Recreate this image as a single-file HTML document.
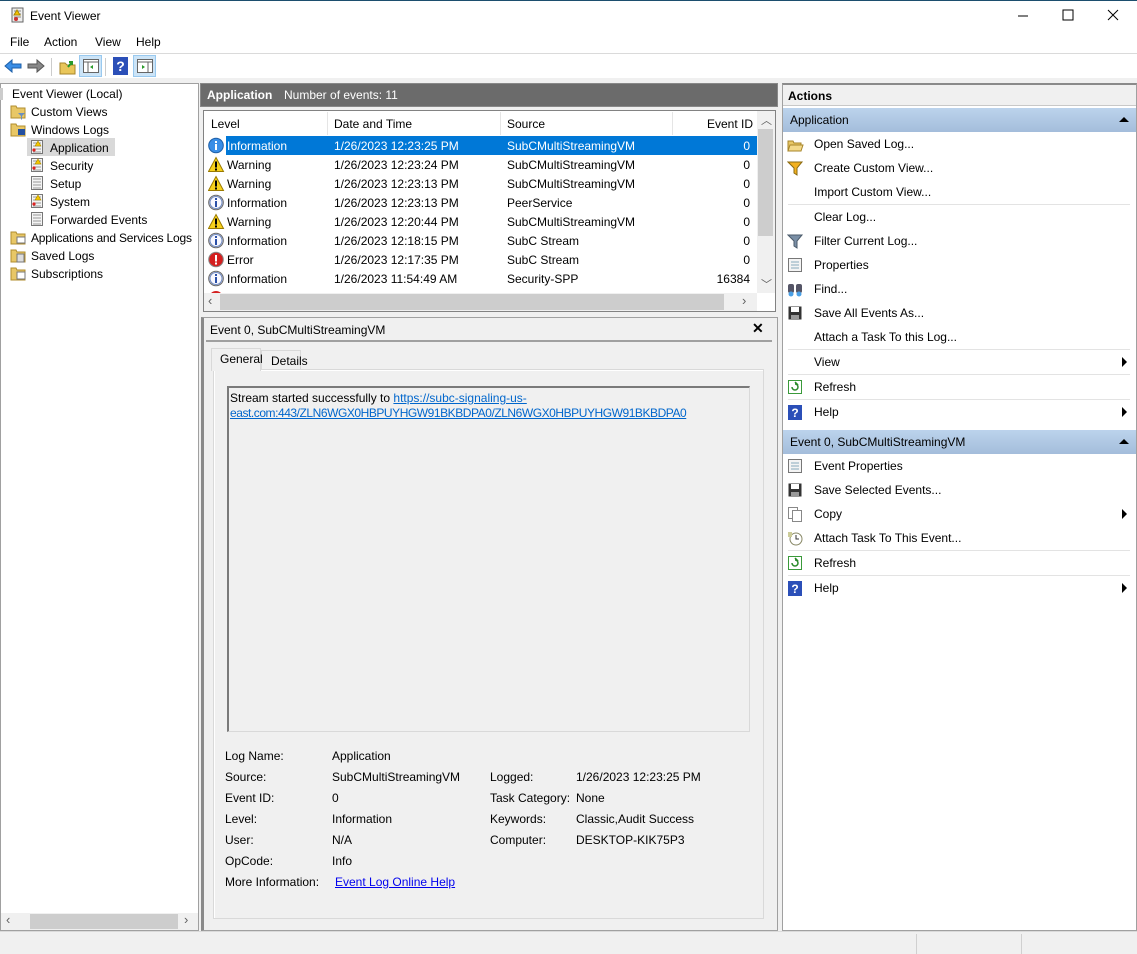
<!DOCTYPE html>
<html><head><meta charset="utf-8"><style>
*{margin:0;padding:0;box-sizing:border-box}
body{width:1137px;height:954px;overflow:hidden;background:#f0f0f0;font-family:"Liberation Sans",sans-serif;font-size:12px;color:#000;position:relative}
.a{position:absolute;white-space:nowrap}
.ico{position:absolute;width:16px;height:16px}
.row{position:absolute;left:206px;width:551px;height:19px}
.row span{position:absolute;top:3px}
.act{position:absolute;left:814px}
.sep{position:absolute;left:788px;width:342px;height:1px;background:#e3e3e3}
.tri{position:absolute;width:0;height:0;border-top:5px solid transparent;border-bottom:5px solid transparent;border-left:5px solid #000}
a{color:#0066cc}
</style></head><body>
<div class="a" style="left:0;top:0;width:1137px;height:53px;background:#fff"></div>
<div class="a" style="left:0;top:0;width:1137px;height:1px;background:#1c4e6e"></div>
<svg class="ico" style="left:9px;top:7px" viewBox="0 0 16 16"><rect x="3" y="1" width="11" height="14" fill="#eee" stroke="#666"/><path d="M5 4h7M5 7h7M5 10h7" stroke="#888"/><path d="M8 3l3 5H5z" fill="#f5c400" stroke="#a80"/><circle cx="7" cy="12" r="2" fill="#c33"/></svg>
<div class="a" style="left:30px;top:9px">Event Viewer</div>
<svg class="a" style="left:1017px;top:10px" width="12" height="12"><path d="M1 6h10" stroke="#000"/></svg>
<svg class="a" style="left:1062px;top:9px" width="12" height="12"><rect x="1" y="1" width="10" height="10" fill="none" stroke="#000"/></svg>
<svg class="a" style="left:1107px;top:9px" width="12" height="12"><path d="M1 1l10 10M11 1L1 11" stroke="#000"/></svg>
<div class="a" style="left:10px;top:35px">File</div>
<div class="a" style="left:44px;top:35px">Action</div>
<div class="a" style="left:95px;top:35px">View</div>
<div class="a" style="left:136px;top:35px">Help</div>
<div class="a" style="left:0;top:53px;width:1137px;height:1px;background:#dadada"></div>
<div class="a" style="left:0;top:54px;width:1137px;height:24px;background:#fff"></div>
<svg class="a" style="left:4px;top:58px" width="18" height="16"><path d="M1 8l7-6v4h9v4H8v4z" fill="#3a8ee6" stroke="#1d5fa8"/></svg>
<svg class="a" style="left:27px;top:58px" width="18" height="16"><path d="M17 8l-7-6v4H1v4h9v4z" fill="#888" stroke="#555"/></svg>
<div class="a" style="left:51px;top:58px;width:1px;height:18px;background:#ccc"></div>
<svg class="a" style="left:59px;top:58px" width="17" height="17"><path d="M1 5h5l2 2h8v9H1z" fill="#e9c65a" stroke="#a7852a"/><path d="M9 9l4-5M10 4h3v3" stroke="#2a9a2a" stroke-width="2" fill="none"/></svg>
<div class="a" style="left:79px;top:55px;width:23px;height:22px;background:#cce4f7;border:1px solid #99c9ef"></div>
<svg class="a" style="left:83px;top:59px" width="16" height="14"><rect x="0.5" y="0.5" width="15" height="13" fill="#fff" stroke="#666"/><path d="M0 3h16M5 3v11" stroke="#666"/><path d="M10 6l-3 2 3 2z" fill="#2a9a2a"/></svg>
<div class="a" style="left:105px;top:58px;width:1px;height:18px;background:#ccc"></div>
<div class="a" style="left:113px;top:57px;width:15px;height:18px;background:#2b4fb8;color:#fff;font-weight:bold;text-align:center;line-height:18px;font-size:14px">?</div>
<div class="a" style="left:133px;top:55px;width:23px;height:22px;background:#cce4f7;border:1px solid #99c9ef"></div>
<svg class="a" style="left:137px;top:59px" width="16" height="14"><rect x="0.5" y="0.5" width="15" height="13" fill="#fff" stroke="#666"/><path d="M0 3h16M11 3v11" stroke="#666"/><path d="M5 6l3 2-3 2z" fill="#2a9a2a"/></svg>
<div class="a" style="left:0;top:83px;width:199px;height:848px;background:#fff;border:1px solid #a0a0a0"></div>
<div class="a" style="left:27px;top:138px;width:88px;height:18px;background:#d9d9d9"></div>
<div class="a" style="left:12px;top:87px">Event Viewer (Local)</div>
<div class="a" style="left:31px;top:105px">Custom Views</div>
<div class="a" style="left:31px;top:123px">Windows Logs</div>
<div class="a" style="left:50px;top:141px">Application</div>
<div class="a" style="left:50px;top:159px">Security</div>
<div class="a" style="left:50px;top:177px">Setup</div>
<div class="a" style="left:50px;top:195px">System</div>
<div class="a" style="left:50px;top:213px">Forwarded Events</div>
<div class="a" style="left:31px;top:231px;letter-spacing:-0.2px">Applications and Services Logs</div>
<div class="a" style="left:31px;top:249px">Saved Logs</div>
<div class="a" style="left:31px;top:267px">Subscriptions</div>
<svg class="a" style="left:0;top:86px" width="200" height="200">
<defs><g id="fd"><path d="M1 3h5l1 2h8v10H1z" fill="#e8c766" stroke="#b08d2e"/></g>
<g id="lg"><rect x="2.5" y="1.5" width="11" height="13" fill="#f4f4f4" stroke="#777"/><path d="M4 4h8M4 7h8M4 10h8M4 13h8" stroke="#999"/></g>
<g id="lw"><use href="#lg"/><path d="M9 2l3 5H6z" fill="#f3c600" stroke="#a80" stroke-width=".6"/><circle cx="5" cy="11" r="1.6" fill="#d22"/></g></defs>
<rect x="0" y="2" width="3" height="12" fill="#ccc"/>
<use href="#fd" x="10" y="17"/><path d="M18 27h7l-3 3v3l-1 1v-4z" fill="#6a8fbf"/>
<use href="#fd" x="10" y="35"/><rect x="18" y="43" width="7" height="6" fill="#2450a0"/>
<use href="#lw" x="29" y="53"/><use href="#lw" x="29" y="71"/><use href="#lg" x="29" y="89"/><use href="#lw" x="29" y="107"/><use href="#lg" x="29" y="125"/>
<use href="#fd" x="10" y="143"/><rect x="17" y="151" width="8" height="6" fill="#fff" stroke="#777"/>
<use href="#fd" x="10" y="161"/><rect x="17" y="168" width="7" height="8" fill="#ddd" stroke="#777"/>
<use href="#fd" x="10" y="179"/><rect x="17" y="186" width="8" height="7" fill="#fff" stroke="#777"/>
</svg>
<div class="a" style="left:1px;top:913px;width:197px;height:17px;background:#f0f0f0"></div>
<div class="a" style="left:30px;top:914px;width:148px;height:15px;background:#cdcdcd"></div>
<div class="a" style="left:6px;top:912px;color:#606060;font-size:13px">‹</div>
<div class="a" style="left:184px;top:912px;color:#606060;font-size:13px">›</div>
<div class="a" style="left:200px;top:83px;width:578px;height:24px;background:#6b6b6b;border:1px solid #888"></div>
<div class="a" style="left:207px;top:88px;color:#fff;font-weight:bold">Application</div>
<div class="a" style="left:284px;top:88px;color:#fff">Number of events: 11</div>
<div class="a" style="left:203px;top:110px;width:573px;height:202px;background:#fff;border:1px solid #828282"></div>
<div class="a" style="left:327px;top:112px;width:1px;height:23px;background:#e5e5e5"></div>
<div class="a" style="left:500px;top:112px;width:1px;height:23px;background:#e5e5e5"></div>
<div class="a" style="left:672px;top:112px;width:1px;height:23px;background:#e5e5e5"></div>
<div class="a" style="left:211px;top:117px">Level</div>
<div class="a" style="left:334px;top:117px">Date and Time</div>
<div class="a" style="left:507px;top:117px">Source</div>
<div class="a" style="left:707px;top:117px">Event ID</div>
<div class="a" style="left:226px;top:136px;width:531px;height:19px;background:#0078d7"></div>
<div class="a" style="left:757px;top:111px;width:18px;height:182px;background:#f0f0f0"></div>
<div class="a" style="left:758px;top:129px;width:15px;height:107px;background:#cdcdcd"></div>
<div class="a" style="left:761px;top:112px;color:#606060;font-size:11px">︿</div>
<div class="a" style="left:761px;top:276px;color:#606060;font-size:11px">﹀</div>
<div class="a" style="left:204px;top:293px;width:553px;height:18px;background:#f0f0f0"></div>
<div class="a" style="left:220px;top:294px;width:504px;height:16px;background:#cdcdcd"></div>
<div class="a" style="left:208px;top:293px;color:#606060;font-size:13px">‹</div>
<div class="a" style="left:742px;top:293px;color:#606060;font-size:13px">›</div>
<svg class="a" style="left:0;top:0" width="0" height="0"><defs>
<g id="inf"><circle cx="8" cy="8" r="7.3" fill="#eef" stroke="#666"/><circle cx="8" cy="8" r="6" fill="#f8f8ff" stroke="#6c88c0"/><rect x="7" y="6.5" width="2" height="6" fill="#2a4fa8"/><rect x="7" y="3.5" width="2" height="2" fill="#2a4fa8"/></g>
<g id="infs"><circle cx="8" cy="8" r="7.3" fill="#3a8ee6" stroke="#1d5fa8"/><rect x="7" y="6.5" width="2" height="6" fill="#fff"/><rect x="7" y="3.5" width="2" height="2" fill="#fff"/></g>
<g id="wrn"><path d="M8 1l7.5 14H0.5z" fill="#f8d21c" stroke="#9a7a00"/><rect x="7" y="5" width="2" height="6" fill="#000"/><rect x="7" y="12" width="2" height="2" fill="#000"/></g>
<g id="err"><circle cx="8" cy="8" r="7.3" fill="#d42020" stroke="#888"/><rect x="7" y="3.5" width="2" height="6.5" fill="#fff"/><rect x="7" y="11" width="2" height="2" fill="#fff"/></g>
</defs></svg>
<svg class="a" style="left:208px;top:136px" width="18" height="157">
<use href="#infs" y="1.5"/><use href="#wrn" y="20.5"/><use href="#wrn" y="39.5"/><use href="#inf" y="58.5"/><use href="#wrn" y="77.5"/><use href="#inf" y="96.5"/><use href="#err" y="115.5"/><use href="#inf" y="134.5"/><circle cx="8" cy="162" r="7" fill="#d42020"/></svg>
<div class="row" style="top:136px;color:#fff"><span style="left:21px">Information</span><span style="left:128px">1/26/2023 12:23:25 PM</span><span style="left:301px">SubCMultiStreamingVM</span><span style="right:7px">0</span></div>
<div class="row" style="top:155px"><span style="left:21px">Warning</span><span style="left:128px">1/26/2023 12:23:24 PM</span><span style="left:301px">SubCMultiStreamingVM</span><span style="right:7px">0</span></div>
<div class="row" style="top:174px"><span style="left:21px">Warning</span><span style="left:128px">1/26/2023 12:23:13 PM</span><span style="left:301px">SubCMultiStreamingVM</span><span style="right:7px">0</span></div>
<div class="row" style="top:193px"><span style="left:21px">Information</span><span style="left:128px">1/26/2023 12:23:13 PM</span><span style="left:301px">PeerService</span><span style="right:7px">0</span></div>
<div class="row" style="top:212px"><span style="left:21px">Warning</span><span style="left:128px">1/26/2023 12:20:44 PM</span><span style="left:301px">SubCMultiStreamingVM</span><span style="right:7px">0</span></div>
<div class="row" style="top:231px"><span style="left:21px">Information</span><span style="left:128px">1/26/2023 12:18:15 PM</span><span style="left:301px">SubC Stream</span><span style="right:7px">0</span></div>
<div class="row" style="top:250px"><span style="left:21px">Error</span><span style="left:128px">1/26/2023 12:17:35 PM</span><span style="left:301px">SubC Stream</span><span style="right:7px">0</span></div>
<div class="row" style="top:269px"><span style="left:21px">Information</span><span style="left:128px">1/26/2023 11:54:49 AM</span><span style="left:301px">Security-SPP</span><span style="right:7px">16384</span></div>
<div class="a" style="left:201px;top:317px;width:577px;height:614px;border:1px solid #a0a0a0;border-left:3px solid #8a8a8a"></div>
<div class="a" style="left:210px;top:323px">Event 0, SubCMultiStreamingVM</div>
<div class="a" style="left:752px;top:320px;font-weight:bold;font-size:14px">✕</div>
<div class="a" style="left:206px;top:340px;width:566px;height:2px;background:#a0a0a0"></div>
<div class="a" style="left:213px;top:369px;width:551px;height:550px;background:#f0f0f0;border:1px solid #d9d9d9;box-shadow:inset 1px 1px 0 #fff"></div>
<div class="a" style="left:211px;top:348px;width:50px;height:23px;background:#f0f0f0;border:1px solid #d9d9d9;border-bottom:none"></div>
<div class="a" style="left:261px;top:350px;width:40px;height:20px;background:#f0f0f0;border:1px solid #d9d9d9"></div>
<div class="a" style="left:220px;top:352px">General</div>
<div class="a" style="left:271px;top:354px">Details</div>
<div class="a" style="left:227px;top:386px;width:523px;height:346px;border:1px solid #d9d9d9;border-top:2px solid #7a7a7a;border-left:2px solid #7a7a7a"></div>
<div class="a" style="left:230px;top:391px;line-height:15px">Stream started successfully to <a href="#">https://subc-signaling-us-</a><br><a href="#" style="letter-spacing:-0.45px">east.com:443/ZLN6WGX0HBPUYHGW91BKBDPA0/ZLN6WGX0HBPUYHGW91BKBDPA0</a></div>
<div class="a" style="left:225px;top:746px;line-height:21px">Log Name:<br>Source:<br>Event ID:<br>Level:<br>User:<br>OpCode:<br>More Information:</div>
<div class="a" style="left:332px;top:746px;line-height:21px">Application<br>SubCMultiStreamingVM<br>0<br>Information<br>N/A<br>Info</div>
<div class="a" style="left:335px;top:875px"><a href="#" style="color:#0000ee">Event Log Online Help</a></div>
<div class="a" style="left:490px;top:767px;line-height:21px">Logged:<br>Task Category:<br>Keywords:<br>Computer:</div>
<div class="a" style="left:576px;top:767px;line-height:21px">1/26/2023 12:23:25 PM<br>None<br>Classic,Audit Success<br>DESKTOP-KIK75P3</div>
<div class="a" style="left:782px;top:83px;width:355px;height:848px;background:#fff;border:1px solid #a0a0a0;border-top:2px solid #8a8a8a"></div>
<div class="a" style="left:783px;top:85px;width:353px;height:21px;background:#f0f0f0;border-bottom:1px solid #c8c8c8"></div>
<div class="a" style="left:788px;top:89px;font-weight:bold">Actions</div>
<div class="a" style="left:783px;top:108px;width:353px;height:24px;background:linear-gradient(#bcd3ec,#a4bddb)"></div>
<div class="a" style="left:790px;top:113px">Application</div>
<div class="a" style="left:1119px;top:117px;border-left:5px solid transparent;border-right:5px solid transparent;border-bottom:5px solid #000"></div>
<div class="a" style="left:783px;top:430px;width:353px;height:24px;background:linear-gradient(#bcd3ec,#a4bddb)"></div>
<div class="a" style="left:790px;top:435px">Event 0, SubCMultiStreamingVM</div>
<div class="a" style="left:1119px;top:439px;border-left:5px solid transparent;border-right:5px solid transparent;border-bottom:5px solid #000"></div>
<div class="act" style="top:137px">Open Saved Log...</div>
<div class="act" style="top:161px">Create Custom View...</div>
<div class="act" style="top:185px">Import Custom View...</div>
<div class="sep" style="top:204px"></div>
<div class="act" style="top:210px">Clear Log...</div>
<div class="act" style="top:234px">Filter Current Log...</div>
<div class="act" style="top:258px">Properties</div>
<div class="act" style="top:282px">Find...</div>
<div class="act" style="top:306px">Save All Events As...</div>
<div class="act" style="top:330px">Attach a Task To this Log...</div>
<div class="sep" style="top:349px"></div>
<div class="act" style="top:355px">View</div>
<div class="tri" style="left:1122px;top:357px"></div>
<div class="sep" style="top:374px"></div>
<div class="act" style="top:380px">Refresh</div>
<div class="sep" style="top:399px"></div>
<div class="act" style="top:405px">Help</div>
<div class="tri" style="left:1122px;top:407px"></div>
<div class="act" style="top:459px">Event Properties</div>
<div class="act" style="top:483px">Save Selected Events...</div>
<div class="act" style="top:507px">Copy</div>
<div class="tri" style="left:1122px;top:509px"></div>
<div class="act" style="top:531px">Attach Task To This Event...</div>
<div class="sep" style="top:550px"></div>
<div class="act" style="top:556px">Refresh</div>
<div class="sep" style="top:575px"></div>
<div class="act" style="top:581px">Help</div>
<div class="tri" style="left:1122px;top:583px"></div>
<svg class="a" style="left:787px;top:135px" width="20" height="470">
<g transform="translate(0,1)"><path d="M1 5h5l1 2h7v8H1z" fill="#e8c766" stroke="#a7852a"/><path d="M3 9h13l-2 6H1z" fill="#f3d98a" stroke="#a7852a"/></g>
<g transform="translate(0,25)"><path d="M1 2h14l-5 6v7l-3-2V8z" fill="#f2b01e" stroke="#8a6a10"/></g>
<g transform="translate(0,98)"><path d="M1 2h14l-5 6v7l-3-2V8z" fill="#7a8fa6" stroke="#4a5a6a"/></g>
<g transform="translate(0,122)"><rect x="1.5" y="1.5" width="13" height="13" fill="#f4f4f4" stroke="#777"/><path d="M4 5h8M4 8h8M4 11h8" stroke="#8ab"/></g>
<g transform="translate(0,146)"><rect x="1" y="3" width="6" height="9" rx="2" fill="#556"/><rect x="9" y="3" width="6" height="9" rx="2" fill="#556"/><circle cx="4" cy="13" r="2.5" fill="#4aa0e6"/><circle cx="12" cy="13" r="2.5" fill="#4aa0e6"/></g>
<g transform="translate(0,170)"><rect x="1.5" y="1.5" width="13" height="13" fill="#333"/><rect x="4" y="2" width="8" height="5" fill="#fff"/><rect x="4" y="10" width="8" height="4" fill="#999"/></g>
<g transform="translate(0,244)"><rect x="1.5" y="1.5" width="13" height="13" fill="#fff" stroke="#3a9a3a"/><path d="M5 8a3 3 0 1 0 3-3h2l-2-2" stroke="#2a8a2a" stroke-width="1.5" fill="none"/></g>
<g transform="translate(0,269)"><rect x="1" y="1" width="14" height="15" fill="#2b4fb8"/><text x="8" y="13" font-size="12" font-weight="bold" fill="#fff" text-anchor="middle" font-family="Liberation Sans">?</text></g>
<g transform="translate(0,323)"><rect x="1.5" y="1.5" width="13" height="13" fill="#f4f4f4" stroke="#777"/><path d="M4 5h8M4 8h8M4 11h8" stroke="#8ab"/></g>
<g transform="translate(0,347)"><rect x="1.5" y="1.5" width="13" height="13" fill="#333"/><rect x="4" y="2" width="8" height="5" fill="#fff"/><rect x="4" y="10" width="8" height="4" fill="#999"/></g>
<g transform="translate(0,371)"><rect x="1.5" y="1.5" width="9" height="11" fill="#fff" stroke="#888"/><rect x="5.5" y="4.5" width="9" height="11" fill="#fff" stroke="#888"/></g>
<g transform="translate(0,395)"><circle cx="9" cy="9" r="6" fill="#fff" stroke="#886"/><path d="M9 5v4h3" stroke="#333" fill="none"/><rect x="1" y="2" width="4" height="5" fill="#cc9"/></g>
<g transform="translate(0,420)"><rect x="1.5" y="1.5" width="13" height="13" fill="#fff" stroke="#3a9a3a"/><path d="M5 8a3 3 0 1 0 3-3h2l-2-2" stroke="#2a8a2a" stroke-width="1.5" fill="none"/></g>
<g transform="translate(0,445)"><rect x="1" y="1" width="14" height="15" fill="#2b4fb8"/><text x="8" y="13" font-size="12" font-weight="bold" fill="#fff" text-anchor="middle" font-family="Liberation Sans">?</text></g>
</svg>
<div class="a" style="left:0;top:931px;width:1137px;height:1px;background:#dadada"></div>
<div class="a" style="left:916px;top:934px;width:1px;height:20px;background:#d0d0d0"></div>
<div class="a" style="left:1021px;top:934px;width:1px;height:20px;background:#d0d0d0"></div>
</body></html>
